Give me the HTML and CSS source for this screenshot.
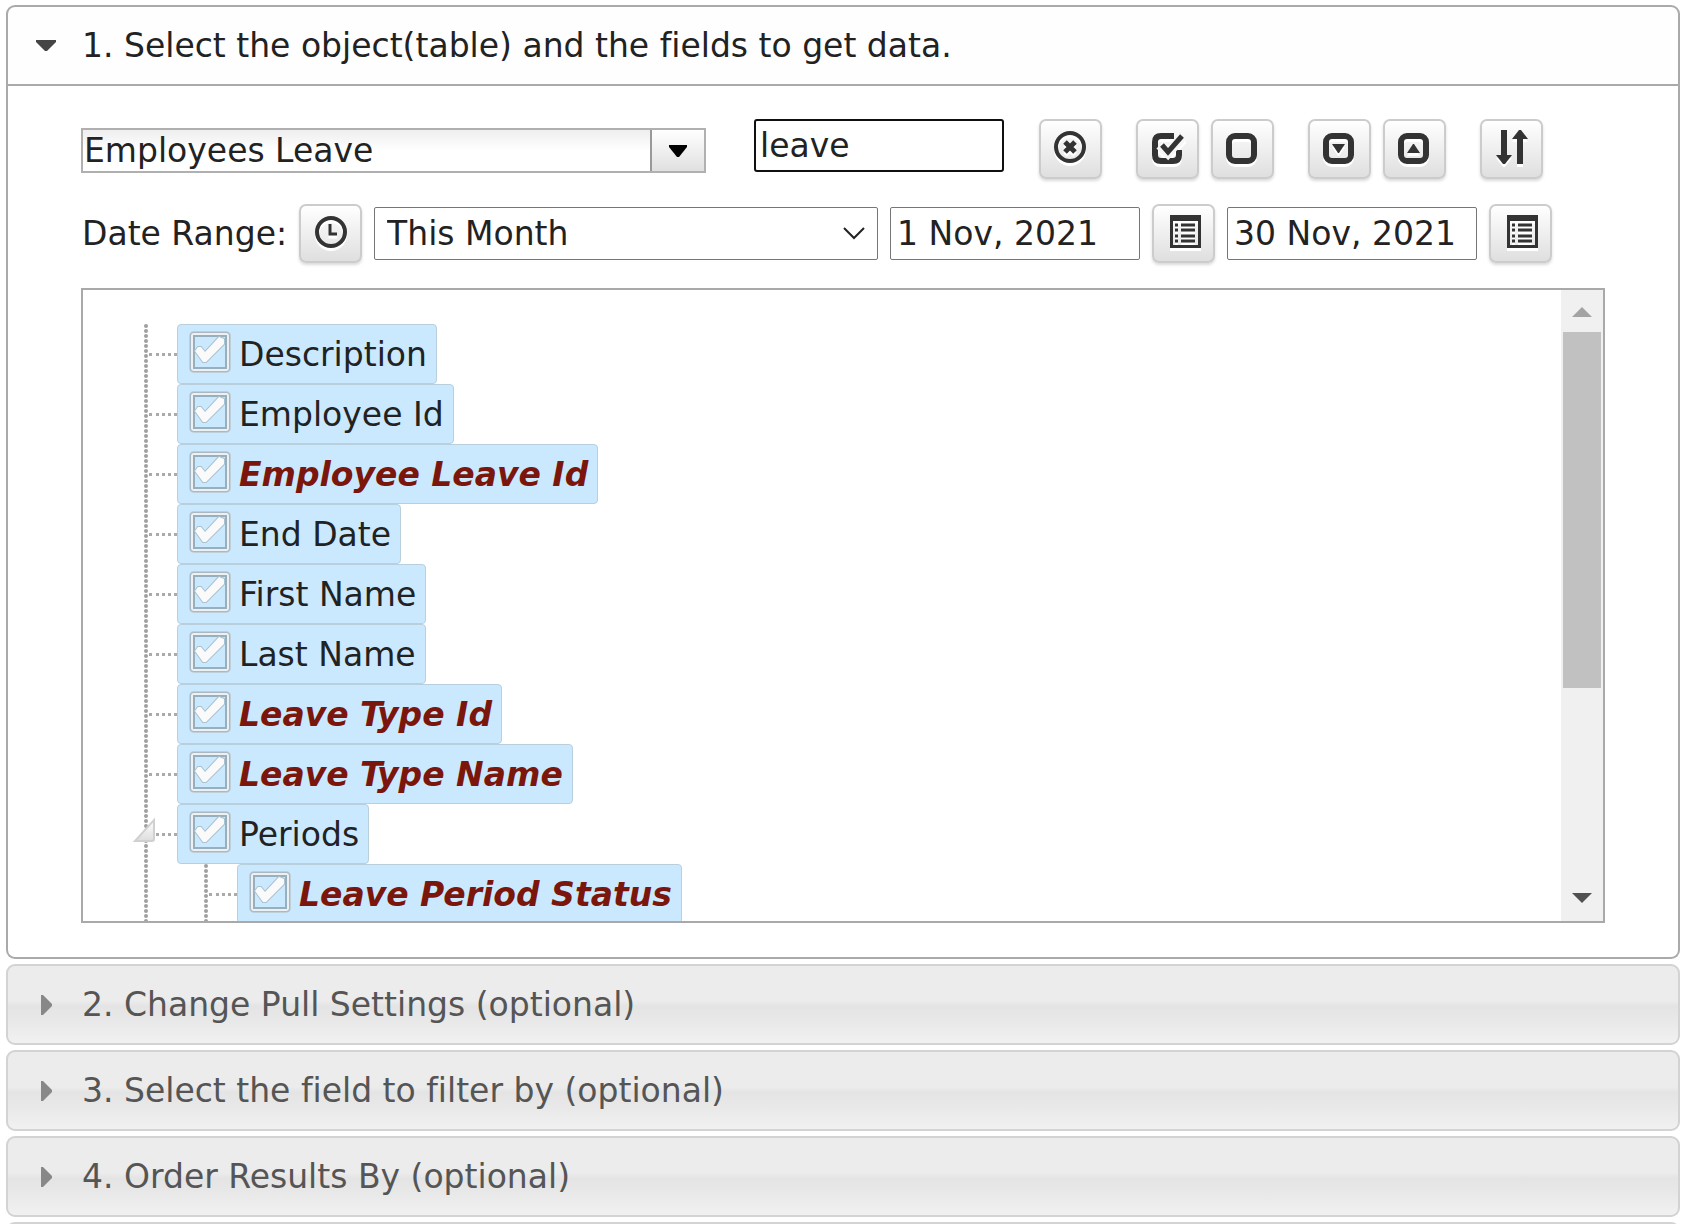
FILE: index.html
```html
<!DOCTYPE html>
<html lang="en">
<head>
    <meta charset="UTF-8">
    <meta name="viewport" content="width=device-width, initial-scale=1.0">
    <title>Get Data</title>
    <link rel="stylesheet" href="styles.css">
</head>
<body>

<div class="accordion">
    <button class="header active" type="button" aria-expanded="true">
        <svg class="arrow" width="20" height="20" viewBox="0 0 20 20"><path d="M0 4h20v2l-9 9H9L0 6z" fill="#454545"/></svg>
        <span>1. Select the object(table) and the fields to get data.</span>
    </button>
    <div class="panel">
        <div class="toolbar">
            <div class="combo">
                <input type="text" value="Employees Leave" aria-label="Object">
                <button type="button" aria-label="Show objects">
                    <svg width="18" height="12" viewBox="0 0 18 12"><path d="M0 0h18v2l-8 10H8L0 2z"/></svg>
                </button>
            </div>
            <input class="field search" type="text" value="leave" aria-label="Search fields">
            <div class="group">
                <button class="btn" type="button" title="Clear">
                    <svg width="36" height="40" viewBox="0 0 36 40"><circle cx="17" cy="18" r="14" fill="none" stroke="#333" stroke-width="4"/><path d="M12 13l10 10M22 13l-10 10" stroke="#333" stroke-width="5"/></svg>
                </button>
            </div>
            <div class="group">
                <button class="btn" type="button" title="Select all">
                    <svg width="36" height="40" viewBox="0 0 36 40"><path d="M24 7H11q-6 0-6 6v13q0 6 6 6h12q6 0 6-6v-5" fill="none" stroke="#333" stroke-width="6"/><path d="M10 16l8 8L34 6" fill="none" stroke="#f6f6f6" stroke-width="10"/><path d="M12 16l6 7L32 7" fill="none" stroke="#333" stroke-width="5"/></svg>
                </button>
                <button class="btn" type="button" title="Select none">
                    <svg width="36" height="40" viewBox="0 0 36 40"><rect x="4" y="7" width="25" height="25" rx="6" fill="none" stroke="#333" stroke-width="6"/></svg>
                </button>
            </div>
            <div class="group">
                <button class="btn" type="button" title="Expand all">
                    <svg width="36" height="40" viewBox="0 0 36 40"><rect x="4" y="7" width="25" height="25" rx="6" fill="none" stroke="#333" stroke-width="6"/><path d="M10 15h13l-6 9h-1z" fill="#333"/></svg>
                </button>
                <button class="btn" type="button" title="Collapse all">
                    <svg width="36" height="40" viewBox="0 0 36 40"><rect x="4" y="7" width="25" height="25" rx="6" fill="none" stroke="#333" stroke-width="6"/><path d="M10 24h13l-6-9h-1z" fill="#333"/></svg>
                </button>
            </div>
            <div class="group">
                <button class="btn" type="button" title="Sort">
                    <svg width="36" height="40" viewBox="0 0 36 40"><path d="M7 1h6v25h5l-7 9h-2l-7-9h5zM23 35V10h-5l7-9h2l7 9h-5v25z" fill="#333"/></svg>
                </button>
            </div>
        </div>

        <div class="dates">
            <label for="range">Date Range:</label>
            <button class="btn" type="button" title="Time">
                <svg width="36" height="40" viewBox="0 0 36 40"><circle cx="18" cy="18" r="14" fill="none" stroke="#333" stroke-width="4"/><path d="M17 10v10h7" fill="none" stroke="#333" stroke-width="3"/></svg>
            </button>
            <select class="field" id="range">
                <option>This Month</option>
                <option>Last Month</option>
            </select>
            <input class="field" type="text" value="1 Nov, 2021" aria-label="From">
            <button class="btn" type="button" title="Pick start date">
                <svg width="36" height="40" viewBox="0 0 36 40"><path d="M4 1h31v33H4zM7 7v24h25V7z" fill="#333" fill-rule="evenodd"/><path d="M9 11h3m3 0h14M9 16h3m3 0h14M9 22h3m3 0h14M9 27h3m3 0h14" stroke="#333" stroke-width="3"/></svg>
            </button>
            <input class="field" type="text" value="30 Nov, 2021" aria-label="To">
            <button class="btn" type="button" title="Pick end date">
                <svg width="36" height="40" viewBox="0 0 36 40"><path d="M4 1h31v33H4zM7 7v24h25V7z" fill="#333" fill-rule="evenodd"/><path d="M9 11h3m3 0h14M9 16h3m3 0h14M9 22h3m3 0h14M9 27h3m3 0h14" stroke="#333" stroke-width="3"/></svg>
            </button>
        </div>

        <div class="listbox">
            <ul class="tree">
                <li><label><input type="checkbox" checked>Description</label></li>
                <li><label><input type="checkbox" checked>Employee Id</label></li>
                <li><label class="match"><input type="checkbox" checked>Employee Leave Id</label></li>
                <li><label><input type="checkbox" checked>End Date</label></li>
                <li><label><input type="checkbox" checked>First Name</label></li>
                <li><label><input type="checkbox" checked>Last Name</label></li>
                <li><label class="match"><input type="checkbox" checked>Leave Type Id</label></li>
                <li><label class="match"><input type="checkbox" checked>Leave Type Name</label></li>
                <li>
                    <svg class="toggle" width="26" height="28" viewBox="0 0 26 28">
                        <defs><linearGradient id="tri" x1="0" y1="0" x2="0" y2="1"><stop offset="0" stop-color="#fff"/><stop offset="1" stop-color="#ddd"/></linearGradient></defs>
                        <path d="M22 3v19q0 2-2 2H3z" fill="url(#tri)" stroke="#d0d0d0" stroke-width="2"/>
                    </svg>
                    <label><input type="checkbox" checked>Periods</label>
                    <ul>
                        <li><label class="match"><input type="checkbox" checked>Leave Period Status</label></li>
                    </ul>
                </li>
            </ul>
            <div class="scrollbar">
                <svg width="20" height="10" viewBox="0 0 20 10"><path d="M0 10L10 0l10 10z" fill="#a3a3a3"/></svg>
                <div class="thumb"></div>
                <svg width="20" height="10" viewBox="0 0 20 10"><path d="M0 0l10 10L20 0z" fill="#505050"/></svg>
            </div>
        </div>
    </div>

    <button class="header" type="button" aria-expanded="false">
        <svg class="arrow" width="20" height="20" viewBox="0 0 20 20"><path d="M5 0h2l9 9v2l-9 9H5z" fill="#888"/></svg>
        <span>2. Change Pull Settings (optional)</span>
    </button>
    <button class="header" type="button" aria-expanded="false">
        <svg class="arrow" width="20" height="20" viewBox="0 0 20 20"><path d="M5 0h2l9 9v2l-9 9H5z" fill="#888"/></svg>
        <span>3. Select the field to filter by (optional)</span>
    </button>
    <button class="header" type="button" aria-expanded="false">
        <svg class="arrow" width="20" height="20" viewBox="0 0 20 20"><path d="M5 0h2l9 9v2l-9 9H5z" fill="#888"/></svg>
        <span>4. Order Results By (optional)</span>
    </button>
    <button class="header" type="button" aria-expanded="false" aria-label="More settings"></button>
</div>

</body>
</html>
```

FILE: styles.css
```css
* {
    box-sizing: border-box;
}
body {
    margin: 0;
    padding: 5px 6px 0;
    height: 100vh;
    overflow: hidden;
    background: #fff;
    color: #222;
    font: 33px/40px Verdana, "DejaVu Sans", sans-serif;
    font-variant-ligatures: none;
}
input, select, button {
    margin: 0;
    font: inherit;
    font-variant-ligatures: none;
    color: inherit;
}
.header {
    display: flex;
    align-items: center;
    gap: 26px;
    width: 100%;
    height: 81px;
    margin-top: 5px;
    padding: 0 28px;
    border: 2px solid #d3d3d3;
    border-radius: 9px;
    background: linear-gradient(#ececec 45%, #e4e4e4 52%, #e8e8e8 70%, #f1f1f1);
    color: #555;
    text-align: left;
}
.header.active {
    margin-top: 0;
    border-color: #aaa;
    border-radius: 9px 9px 0 0;
    background: #fefefe;
    color: #222;
}
.panel {
    padding: 33px 73px 34px;
    border: 2px solid #aaa;
    border-top: 0;
    border-radius: 0 0 9px 9px;
}
.toolbar {
    display: flex;
    align-items: flex-start;
}
.combo {
    display: flex;
    width: 625px;
    height: 45px;
    margin-top: 9px;
    border: 2px solid #b0b0b0;
}
.combo input {
    flex: 1;
    min-width: 0;
    padding: 0 1px;
    border: 0;
    background: linear-gradient(#eee, #fff 50%);
}
.combo button {
    display: flex;
    align-items: center;
    justify-content: center;
    width: 54px;
    padding: 0;
    border: 0;
    border-left: 2px solid #999;
    background: linear-gradient(#fff, #e0e0e0);
}
.field {
    width: 250px;
    height: 53px;
    padding: 0 6px;
    border: 1px solid #767676;
    border-radius: 2px;
    background: #fff;
}
.search {
    margin: 0 1px 0 48px;
    padding: 0 4px;
    border: 2px solid #101010;
    border-radius: 3px;
}
.group {
    display: flex;
    gap: 12px;
    margin-left: 34px;
}
.btn {
    display: flex;
    align-items: center;
    justify-content: center;
    width: 63px;
    height: 60px;
    padding: 0;
    border: 2px solid #ccc;
    border-radius: 7px;
    background: linear-gradient(#fff, #dfdfdf);
    box-shadow: 0 2px 3px rgba(0, 0, 0, 0.15);
}
.btn svg {
    filter: drop-shadow(0 3px 0 #fff);
}
.dates {
    display: flex;
    align-items: center;
    gap: 12px;
    margin: 25px 0;
}
.dates label {
    padding-left: 1px;
}
.dates .btn {
    height: 59px;
}
select.field {
    width: 504px;
    padding: 0 12px;
    appearance: none;
    background: #fff url("data:image/svg+xml,%3Csvg xmlns='http://www.w3.org/2000/svg' width='22' height='14'%3E%3Cpath d='M1 1l10 10L21 1' fill='none' stroke='%23222' stroke-width='2'/%3E%3C/svg%3E") no-repeat right 12px center;
}
.listbox {
    display: flex;
    height: 635px;
    border: 2px solid #a9a9a9;
    overflow: hidden;
}
.tree {
    flex: 1;
    margin: 0;
    padding: 34px 0 0 61px;
}
.tree, .tree ul {
    list-style: none;
}
.tree ul {
    margin: 0;
    padding: 0 0 0 27px;
}
.tree li {
    position: relative;
    padding-left: 33px;
    background: url("data:image/svg+xml,%3Csvg xmlns='http://www.w3.org/2000/svg' width='4' height='5'%3E%3Ccircle cx='2' cy='2' r='2' fill='%23a0a0a0'/%3E%3C/svg%3E") repeat-y;
}
.tree li::before {
    content: "";
    position: absolute;
    top: 29px;
    left: 5px;
    width: 28px;
    border-top: 3px dotted #aaa;
}
.tree label {
    display: flex;
    align-items: center;
    gap: 8px;
    width: max-content;
    height: 60px;
    padding: 2px 9px 0 11px;
    border: 1px solid #b9cfdc;
    border-radius: 4px;
    background: #cbe9fe;
}
.tree .match {
    color: #7a160c;
    font-weight: bold;
    font-style: italic;
}
.tree input {
    width: 42px;
    height: 42px;
    margin-bottom: 6px;
    appearance: none;
    background: url("data:image/svg+xml,%3Csvg xmlns='http://www.w3.org/2000/svg' width='42' height='42'%3E%3Crect width='42' height='42' rx='5' fill='%23bccfdb'/%3E%3Crect x='1' y='1' width='40' height='40' rx='4' fill='%23a9b8c2'/%3E%3Crect x='2' y='2' width='38' height='38' rx='3' fill='%23eef1f3'/%3E%3Crect x='5' y='5' width='32' height='32' fill='%23cbe9fe' stroke='%2398afbd' stroke-width='2'/%3E%3Cpath d='M6 20l3-4h3l4 5L30 6l5 2v5L17 31h-3z' fill='%23fafafa' stroke='%23a9c2d1' stroke-width='2' paint-order='stroke'/%3E%3C/svg%3E");
}
.toggle {
    position: absolute;
    top: 13px;
    left: -12px;
}
.scrollbar {
    display: flex;
    flex-direction: column;
    align-items: center;
    width: 42px;
    padding: 17px 0 18px;
    background: #f0f0f0;
}
.thumb {
    width: 38px;
    height: 356px;
    margin: 15px 0 auto;
    background: #c1c1c1;
}
```
